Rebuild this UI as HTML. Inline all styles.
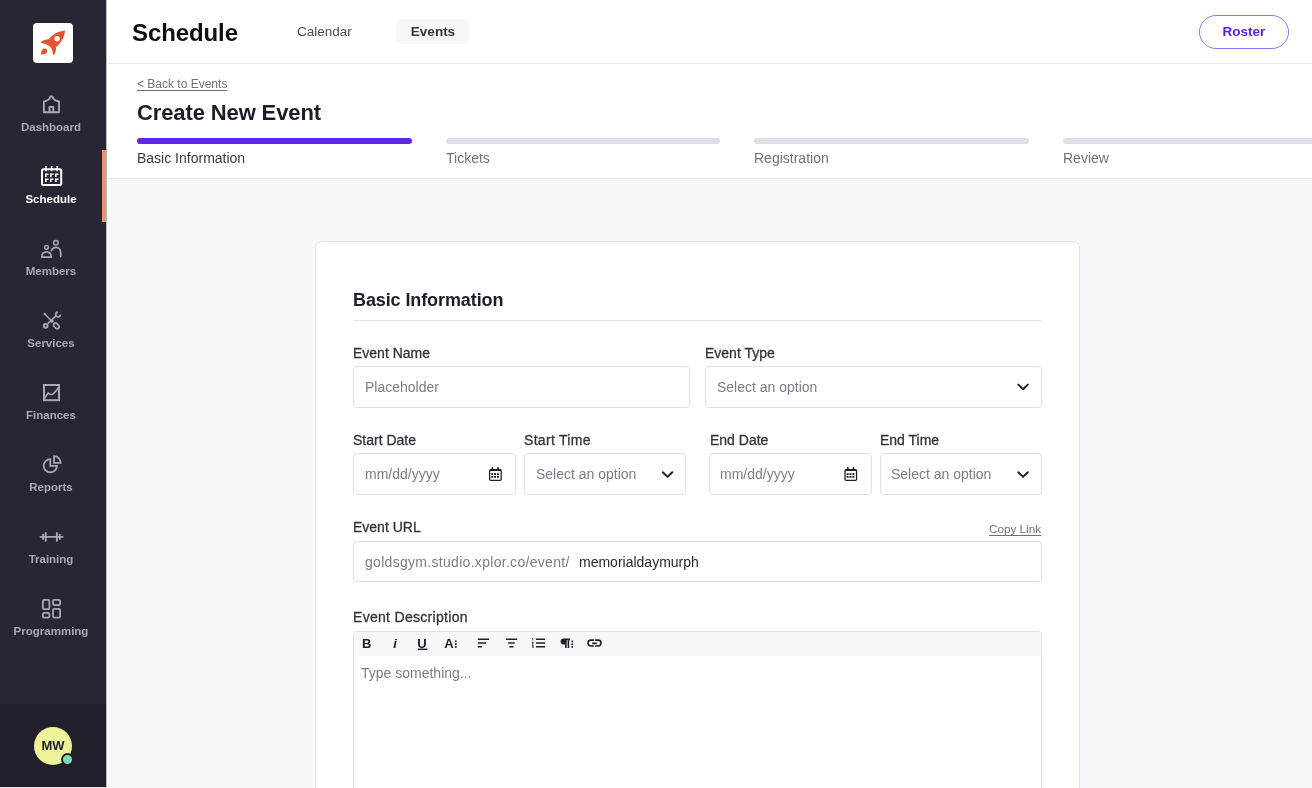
<!DOCTYPE html>
<html>
<head>
<meta charset="utf-8">
<style>
*{box-sizing:border-box;margin:0;padding:0}
html,body{width:1312px;height:788px;overflow:hidden;background:#fff;font-family:"Liberation Sans",sans-serif;-webkit-font-smoothing:antialiased}
.abs,#side,#header,#sub,.nav,.label,.ph,.link,.avatar,.h2,.tab,.roster,.title,.h1,.back,.step{will-change:transform}
.abs{position:absolute}
#side{position:absolute;left:0;top:0;width:107px;height:788px;background:#282633;border-right:1px solid #b8b8bf}
#side .bottom{position:absolute;left:0;top:704px;width:106px;height:84px;background:#211f2a}
.logo{position:absolute;left:33px;top:22.5px;width:40px;height:40.5px;background:#fff;border-radius:4px}
.nav{position:absolute;left:0;width:106px;height:72px;color:#a9a8b5}
.nav .lbl{position:absolute;left:0;width:102px;text-align:center;top:42px;font-size:11.5px;font-weight:700;line-height:14px}
.nav svg{position:absolute}
.nav.active{color:#fff}
.indicator{position:absolute;left:102px;top:150px;width:4px;height:72px;background:#ef9170}
#header{position:absolute;left:107px;top:0;width:1205px;height:64px;border-bottom:1px solid #e6e6eb;background:#fff}
.title{position:absolute;left:25px;top:18px;letter-spacing:-0.1px;font-size:24px;font-weight:700;color:#0f0f14;line-height:30px}
.tab{position:absolute;font-size:13.5px;line-height:16px;color:#4a4a55}
.tab.active{font-weight:700;color:#34333e;background:#f8f8fa;border-radius:5px}
.roster{position:absolute;left:1092px;top:14.5px;width:90px;height:34px;border:1.5px solid #9373ef;border-radius:17px;color:#5a22e6;font-weight:700;font-size:13.5px;text-align:center;line-height:31px}
#sub{position:absolute;left:107px;top:64px;width:1205px;height:115px;background:#fff;border-bottom:1px solid #e6e6eb}
.back{position:absolute;left:30px;top:13px;font-size:12px;color:#6f6e7c;text-decoration:underline;text-underline-offset:2px;line-height:14px}
.h1{position:absolute;left:30px;top:35px;letter-spacing:-0.12px;font-size:22px;font-weight:700;color:#1e1c29;line-height:28px}
.bar{position:absolute;top:74px;height:6px;border-radius:3px;background:#dfdfe5}
.bar.on{background:#5e25ea}
.step{position:absolute;top:86px;font-size:14px;color:#727180;line-height:16px}
.step.on{color:#3a3945}
#main{position:absolute;left:107px;top:179px;width:1205px;height:609px;background:#f7f8fa}
.card{position:absolute;left:315px;top:241px;width:765px;height:560px;background:#fff;border:1px solid #e3e3e9;border-radius:7px}
.h2{position:absolute;left:353px;top:289px;font-size:18px;font-weight:700;color:#1e1c29;line-height:22px;letter-spacing:-0.1px}
.hr{position:absolute;left:353px;top:320px;width:689px;height:1px;background:#e3e3e9}
.label{position:absolute;font-size:14px;color:#34323e;-webkit-text-stroke:0.3px #34323e;line-height:16px}
.input{position:absolute;height:42px;border:1px solid #e0e0e7;border-radius:4px;background:#fff}
.ph{position:absolute;font-size:14px;color:#7c7b89;line-height:16px;white-space:nowrap}
.link{position:absolute;font-size:11.7px;color:#6f6e7c;text-decoration:underline;text-underline-offset:2px;line-height:14px}
.editor{position:absolute;left:353px;top:631px;width:689px;height:200px;border:1px solid #dedee4;border-radius:4px;background:#fff;overflow:hidden}
.toolbar{position:absolute;left:0;top:0;width:100%;height:24px;background:#f7f8fa}
.avatar{position:absolute;left:34px;top:726.5px;width:38px;height:38px;border-radius:50%;background:#eef39a;color:#1f1d28;font-size:13px;font-weight:700;text-align:center;line-height:38px}
.dot{position:absolute;left:60.5px;top:752.5px;width:13px;height:13px;border-radius:50%;background:#7be0b9;border:2px solid #211f2a}
</style>
</head>
<body>
<div id="side">
  <div class="bottom"></div>
</div>
<div class="indicator"></div>
<div class="abs" style="left:0;top:787px;width:107px;height:1px;background:#e4e4e9"></div>
<div class="logo"></div>
<svg class="abs" style="left:0;top:0" width="107" height="788" viewBox="0 0 107 788">
  <g transform="translate(36,26)" fill="#e4552f">
    <path d="M29,4.6 C22,5.5 16.5,8.5 13.2,13 C10,13.5 6.8,14 5.4,15.7 C4.8,16.5 5.2,17.2 6.1,17.3 C9.2,17.7 12.6,18.8 14.9,21.6 C16.2,23.5 16.7,25.8 16.8,27.8 C16.9,28.7 17.6,29 18.2,28.4 C19.8,26.4 20.4,23.8 19.9,21.3 C24.5,17.5 28.5,12 29,4.6 Z"/>
    <circle cx="21.1" cy="12.7" r="2.7" fill="#fff"/>
    <path d="M5.2,28.6 C4.9,26 5.6,23.6 7.6,22.6 C9.3,21.9 11,22.9 11.2,24.7 C11.4,26.9 9.3,28.6 5.2,28.6 Z"/>
  </g>
  <g fill="none" stroke="#a9a8b5" stroke-width="1.9">
    <!-- dashboard house -->
    <path d="M43.9,112.3 V101.4 C47.3,100.9 49.6,99.2 50.4,96.4 H52.4 C53.2,99.2 55.5,100.9 59,101.4 V112.3 Z M49.5,112.3 V106.9 H53.3 V112.3" stroke-linejoin="round"/>
    <!-- members -->
    <circle cx="46.5" cy="247.3" r="1.9" stroke-width="1.5"/>
    <path d="M41.8,257.2 C41.8,253.8 43.8,251.8 46.5,251.8 C49.2,251.8 51.2,253.8 51.2,257.2 Z" stroke-width="1.7"/>
    <circle cx="55.9" cy="242.7" r="2.3" stroke-width="1.5"/>
    <path d="M51.3,250.8 C52.3,248.3 54,247.3 55.9,247.3 C58.8,247.3 60.7,249.5 60.7,252.5 V256.4" stroke-width="1.7" stroke-linecap="round"/>
    <!-- services -->
    <circle cx="44.7" cy="314" r="1.15" fill="#a9a8b5" stroke="none"/>
    <path d="M44.7,314 L51.4,320.7" stroke-width="1.5" stroke-linecap="round"/>
    <path d="M51.2,322.5 L53.4,320.3" stroke-width="2.2"/>
    <rect x="53.2" y="323.9" width="6.4" height="4" rx="2" transform="rotate(45 56.4 325.9)" stroke-width="1.6"/>
    <path d="M48.2,323.2 L55.5,316.3" stroke-width="1.7" stroke-linecap="round"/>
    <circle cx="45.7" cy="325.8" r="1.9" stroke-width="1.9"/>
    <path d="M57.3,312.2 A2.4,2.4 0 1 0 60.3,315.3" stroke-width="1.8" stroke-linecap="round"/>
    <!-- finances -->
    <rect x="44" y="385" width="15" height="15.2" stroke-width="2"/>
    <path d="M44.6,398.2 L48.2,393 C49.5,394.5 51,394.8 52.5,394.2 C54.5,393.2 56.5,390.5 58.8,387.3" stroke-width="1.7"/>
    <!-- reports -->
    <path d="M50.3,459.2 A6.6,6.6 0 1 0 56.9,465.8 H50.3 Z" stroke-width="1.8" stroke-linejoin="miter"/>
    <path d="M54,456.2 V462.8 H60.6 A6.6,6.6 0 0 0 54,456.2 Z" stroke-width="1.8" stroke-linejoin="miter"/>
    <!-- training -->
    <path d="M40.5,536.9 H62.5 M45.7,533 V540.8 M56.9,533 V540.8 M43.1,534.8 V539 M59.8,534.8 V539" stroke-width="1.9" stroke-linecap="round"/>
    <!-- programming -->
    <rect x="42.9" y="599.9" width="6.5" height="9.3" rx="1.3" stroke-width="1.8"/>
    <rect x="53" y="599.9" width="7.1" height="5.2" rx="1.3" stroke-width="1.8"/>
    <rect x="42.9" y="612.8" width="6.5" height="4.8" rx="1.3" stroke-width="1.8"/>
    <rect x="53" y="608.8" width="7.1" height="8.8" rx="1.3" stroke-width="1.8"/>
  </g>
  <!-- schedule calendar (active) -->
  <g fill="none" stroke="#fff">
    <rect x="42" y="169.2" width="19.2" height="15.8" rx="1.6" stroke-width="2"/>
    <path d="M46,165.9 V171.2 M51.6,165.9 V171.2 M57.2,165.9 V171.2" stroke-width="1.5"/>
  </g>
  <g fill="#fff">
    <path d="M45,173.5 h3.6 v1.5 h-2 v2 h-1.6 z"/><path d="M50,173.5 h3.6 v1.5 h-2 v2 h-1.6 z"/><path d="M55,173.5 h3.6 v1.5 h-2 v2 h-1.6 z"/><path d="M45,178.4 h3.6 v1.5 h-2 v2 h-1.6 z"/><path d="M50,178.4 h3.6 v1.5 h-2 v2 h-1.6 z"/><path d="M55,178.4 h3.6 v1.5 h-2 v2 h-1.6 z"/>
  </g>
</svg>
<div class="nav" style="top:78px"><div class="lbl">Dashboard</div></div>
<div class="nav active" style="top:150px"><div class="lbl">Schedule</div></div>
<div class="nav" style="top:222px"><div class="lbl">Members</div></div>
<div class="nav" style="top:294px"><div class="lbl">Services</div></div>
<div class="nav" style="top:366px"><div class="lbl">Finances</div></div>
<div class="nav" style="top:438px"><div class="lbl">Reports</div></div>
<div class="nav" style="top:510px"><div class="lbl">Training</div></div>
<div class="nav" style="top:582px"><div class="lbl">Programming</div></div>
<div class="avatar"><span>MW</span></div>
<div class="dot"></div>

<div id="header">
  <div class="title">Schedule</div>
  <div class="tab" style="left:190px;top:24px">Calendar</div>
  <div class="tab active" style="left:289px;top:19px;width:74px;height:25px;line-height:25px;text-align:center">Events</div>
  <div class="roster">Roster</div>
</div>

<div id="sub">
  <div class="back">&lt; Back to Events</div>
  <div class="h1">Create New Event</div>
  <div class="bar on" style="left:30px;width:275px"></div>
  <div class="bar" style="left:339px;width:274px"></div>
  <div class="bar" style="left:647px;width:275px"></div>
  <div class="bar" style="left:956px;width:260px"></div>
  <div class="step on" style="left:30px">Basic Information</div>
  <div class="step" style="left:339px">Tickets</div>
  <div class="step" style="left:647px">Registration</div>
  <div class="step" style="left:956px">Review</div>
</div>

<div id="main"></div>

<div class="abs" style="left:107px;top:0;width:1px;height:788px;background:#fefefe"></div>
<div class="card"></div>
<div class="h2">Basic Information</div>
<div class="hr"></div>

<div class="label" style="left:353px;top:345px">Event Name</div>
<div class="input" style="left:353px;top:366px;width:337px"></div>
<div class="ph" style="left:365px;top:379px">Placeholder</div>

<div class="label" style="left:705px;top:345px">Event Type</div>
<div class="input" style="left:705px;top:366px;width:337px"></div>
<div class="ph" style="left:717px;top:379px">Select an option</div>

<div class="label" style="left:353px;top:432px">Start Date</div>
<div class="input" style="left:353px;top:453px;width:163px"></div>
<div class="ph" style="left:365px;top:466px">mm/dd/yyyy</div>

<div class="label" style="left:524px;top:432px;letter-spacing:0.3px">Start Time</div>
<div class="input" style="left:524px;top:453px;width:162px"></div>
<div class="ph" style="left:536px;top:466px">Select an option</div>

<div class="label" style="left:710px;top:432px">End Date</div>
<div class="input" style="left:709px;top:453px;width:163px"></div>
<div class="ph" style="left:720px;top:466px">mm/dd/yyyy</div>

<div class="label" style="left:880px;top:432px">End Time</div>
<div class="input" style="left:880px;top:453px;width:162px"></div>
<div class="ph" style="left:891px;top:466px">Select an option</div>

<div class="label" style="left:353px;top:519px">Event URL</div>
<div class="link" style="left:989px;top:522px">Copy Link</div>
<div class="input" style="left:353px;top:541px;width:689px;height:41px"></div>
<div class="ph" style="left:365px;top:554px;letter-spacing:0.3px">goldsgym.studio.xplor.co/event/</div>
<div class="ph" style="left:579px;top:554px;color:#2a2935">memorialdaymurph</div>

<div class="label" style="left:353px;top:609px;letter-spacing:0.3px">Event Description</div>
<div class="editor"><div class="toolbar"></div></div>
<div class="ph" style="left:361px;top:665px">Type something...</div>

<svg class="abs" style="left:0;top:0" width="1312" height="788" viewBox="0 0 1312 788">
  <path d="M1018.3,384.6 L1023.05,389.2 L1027.8,384.6" fill="none" stroke="#1f1d29" stroke-width="2" stroke-linecap="round" stroke-linejoin="round"/>
  <path d="M662.8,472.3 L667.55,476.9 L672.3,472.3" fill="none" stroke="#1f1d29" stroke-width="2" stroke-linecap="round" stroke-linejoin="round"/>
  <path d="M1018.3,472.3 L1023.05,476.9 L1027.8,472.3" fill="none" stroke="#1f1d29" stroke-width="2" stroke-linecap="round" stroke-linejoin="round"/>
  <g transform="translate(489,466.8)">
    <rect x="0" y="2.2" width="12.8" height="12.1" rx="1.8" fill="#1f1d29"/>
    <rect x="1.3" y="4.1" width="10.2" height="8.9" rx=".3" fill="#fff"/>
    <rect x="2.6" y="0.3" width="1.7" height="3.4" rx=".8" fill="#1f1d29"/>
    <rect x="8.2" y="0.3" width="1.7" height="3.4" rx=".8" fill="#1f1d29"/>
    <g fill="#1f1d29"><rect x="2.3" y="6.3" width="1.9" height="1.9"/><rect x="5.1" y="6.3" width="1.9" height="1.9"/><rect x="8" y="6.3" width="1.9" height="1.9"/>
    <rect x="2.3" y="9.1" width="1.9" height="1.9"/><rect x="5.1" y="9.1" width="1.9" height="1.9"/><rect x="8" y="9.1" width="1.9" height="1.9"/></g>
  </g>
  <g transform="translate(844.4,466.8)">
    <rect x="0" y="2.2" width="12.8" height="12.1" rx="1.8" fill="#1f1d29"/>
    <rect x="1.3" y="4.1" width="10.2" height="8.9" rx=".3" fill="#fff"/>
    <rect x="2.6" y="0.3" width="1.7" height="3.4" rx=".8" fill="#1f1d29"/>
    <rect x="8.2" y="0.3" width="1.7" height="3.4" rx=".8" fill="#1f1d29"/>
    <g fill="#1f1d29"><rect x="2.3" y="6.3" width="1.9" height="1.9"/><rect x="5.1" y="6.3" width="1.9" height="1.9"/><rect x="8" y="6.3" width="1.9" height="1.9"/>
    <rect x="2.3" y="9.1" width="1.9" height="1.9"/><rect x="5.1" y="9.1" width="1.9" height="1.9"/><rect x="8" y="9.1" width="1.9" height="1.9"/></g>
  </g>
  <g fill="none" stroke="#1f1d29" stroke-width="1.5">
    <path d="M477.8,639.3 H489.2 M477.8,643 H486 M477.8,646.7 H482" />
    <path d="M505.8,639.3 H517.2 M508.2,643 H514.8 M509.5,646.7 H513.5" />
    <path d="M536,639.3 H545 M536,643 H545 M536,646.7 H545" />
  </g>
  <g fill="#1f1d29">
    <text x="362" y="648" font-family="Liberation Sans" font-weight="700" font-size="13">B</text>
    <text x="393.2" y="648" font-family="Liberation Sans" font-style="italic" font-weight="700" font-size="13">i</text>
    <text x="417.3" y="648" font-family="Liberation Sans" font-weight="700" font-size="13">U</text>
    <rect x="417.8" y="648.6" width="9.6" height="1.4"/>
    <text x="444.3" y="648" font-family="Liberation Sans" font-weight="700" font-size="13">A</text>
    <rect x="454.9" y="640.5" width="1.7" height="1.7"/><rect x="454.9" y="643.3" width="1.7" height="1.7"/><rect x="454.9" y="646.1" width="1.7" height="1.7"/>
    <path d="M532,638.3 H533.3 V640.6 H532.5 V639 H532 Z M531.9,641.8 H533.5 V643.3 H532.6 V643.8 H533.5 V644.4 H531.9 V642.8 H532.8 V642.4 H531.9 Z M531.9,645.3 H533.5 V648 H531.9 V647.4 H532.8 V646.9 H532.1 V646.5 H532.8 V645.9 H531.9 Z"/>
    <path d="M563.3,638.6 H570 V640.2 H569.2 V648 H567.6 V640.2 H566.7 V648 H565.1 V644.6 H563.6 C561.8,644.6 560.6,643.3 560.6,641.6 C560.6,639.9 561.8,638.6 563.3,638.6 Z"/>
    <rect x="571.4" y="640.6" width="1.6" height="1.6"/><rect x="571.4" y="643.4" width="1.6" height="1.6"/><rect x="571.4" y="646.2" width="1.6" height="1.6"/>
  </g>
  <g fill="none" stroke="#1f1d29" stroke-width="1.6">
    <path d="M593.9,640.1 H590.9 A2.95,2.95 0 0 0 590.9,646 H593.9 M595.1,640.1 H598.1 A2.95,2.95 0 0 1 598.1,646 H595.1 M592.2,643.4 H596.8"/>
  </g>
</svg>
</body>
</html>
